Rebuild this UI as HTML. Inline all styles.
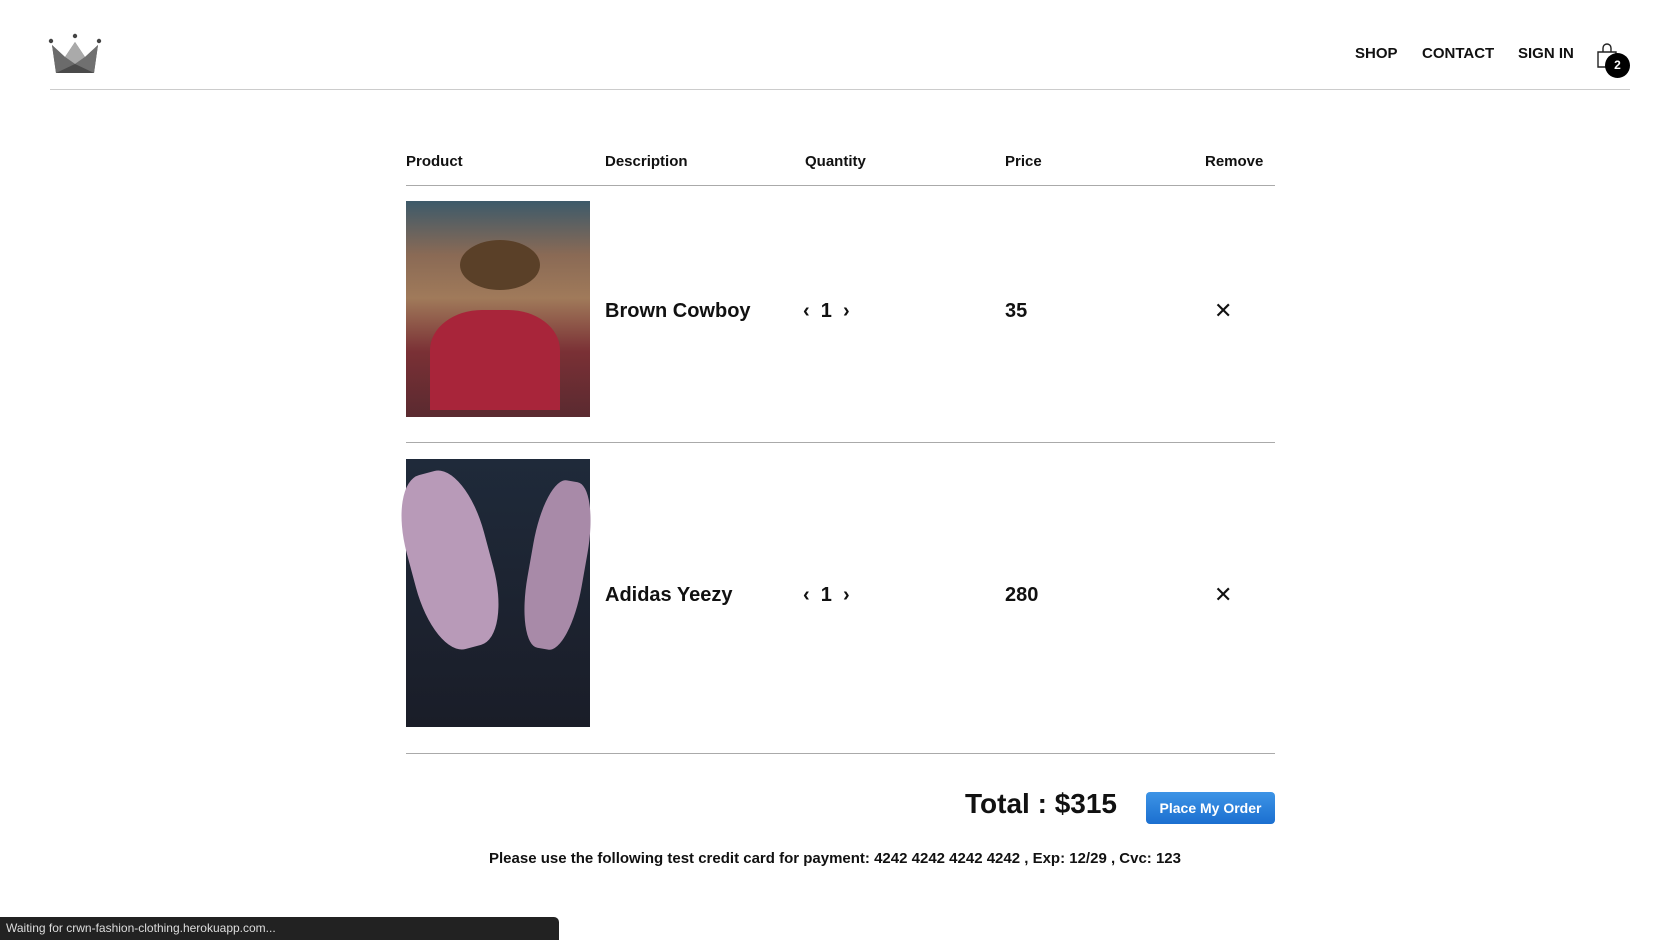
<!DOCTYPE html>
<html><head><style>
*{margin:0;padding:0;box-sizing:border-box}
body{width:1680px;height:940px;background:#fff;font-family:"Liberation Sans",sans-serif;color:#111;position:relative;overflow:hidden}
.a{position:absolute;white-space:nowrap}
.hl{position:absolute;height:1px;background:#ccc}
.nav{font-size:15px;font-weight:bold;top:45px}
.th{font-size:15px;font-weight:bold;top:153px}
.name{font-size:20px;font-weight:bold}
.q{font-size:20px;font-weight:bold}
</style></head><body>
<svg class="a" style="left:48px;top:33px" width="56" height="44" viewBox="0 0 56 44">
<circle cx="3" cy="8" r="2.2" fill="#444"/><circle cx="27" cy="3" r="2.2" fill="#444"/><circle cx="51" cy="8" r="2.2" fill="#444"/>
<polygon points="4,12 17,24 27,9 37,24 50,12 46,40 8,40" fill="#666"/>
<polygon points="17,24 27,9 37,24 27,31" fill="#aaa"/>
<polygon points="4,12 17,24 27,31 8,40" fill="#6b6b6b"/>
<polygon points="50,12 37,24 27,31 46,40" fill="#707070"/>
<polygon points="8,40 27,31 46,40" fill="#4a4a4a"/>
</svg>
<div class="hl" style="left:50px;width:1580px;top:89px"></div>
<div class="a nav" style="left:1355px">SHOP</div>
<div class="a nav" style="left:1422px">CONTACT</div>
<div class="a nav" style="left:1518px">SIGN IN</div>
<svg class="a" style="left:1596px;top:43px" width="24" height="26" viewBox="0 0 24 26"><path d="M2 9h18v15H2z" fill="none" stroke="#222" stroke-width="1.4"/><path d="M7 9V5a4 4 0 0 1 8 0v4" fill="none" stroke="#222" stroke-width="1.4"/></svg>
<div class="a" style="left:1605px;top:53px;width:25px;height:25px;border-radius:50%;background:#000;color:#fff;font-size:12px;font-weight:bold;text-align:center;line-height:25px">2</div>

<div class="a th" style="left:406px">Product</div>
<div class="a th" style="left:605px">Description</div>
<div class="a th" style="left:805px">Quantity</div>
<div class="a th" style="left:1005px">Price</div>
<div class="a th" style="left:1205px">Remove</div>
<div class="hl" style="left:406px;width:869px;top:185px;background:#aaa"></div>

<div class="a" style="left:406px;top:201px;width:184px;height:216px;background:linear-gradient(180deg,#3d5a6a 0%,#8a6a55 25%,#a07a5a 45%,#7a3035 70%,#5a2a30 100%)"></div>
<div class="a" style="left:460px;top:240px;width:80px;height:50px;border-radius:50%;background:#5a4028"></div>
<div class="a" style="left:430px;top:310px;width:130px;height:100px;border-radius:40% 40% 0 0;background:#a8253a"></div>
<div class="a name" style="left:605px;top:300px">Brown Cowboy</div>
<div class="a q" style="left:803px;top:300px">‹&nbsp;&nbsp;1&nbsp;&nbsp;›</div>
<div class="a q" style="left:1005px;top:300px">35</div>
<div class="a" style="left:1214px;top:298px;font-size:22px">✕</div>
<div class="hl" style="left:406px;width:869px;top:442px;background:#aaa"></div>

<div class="a" style="left:406px;top:459px;width:184px;height:268px;background:linear-gradient(180deg,#1f2a3a,#1a1d28)"></div>
<div class="a" style="left:410px;top:470px;width:80px;height:180px;border-radius:40%;background:#b89ab8;transform:rotate(-15deg)"></div>
<div class="a" style="left:530px;top:480px;width:55px;height:170px;border-radius:40%;background:#a88aa8;transform:rotate(10deg)"></div>
<div class="a name" style="left:605px;top:584px">Adidas Yeezy</div>
<div class="a q" style="left:803px;top:584px">‹&nbsp;&nbsp;1&nbsp;&nbsp;›</div>
<div class="a q" style="left:1005px;top:584px">280</div>
<div class="a" style="left:1214px;top:582px;font-size:22px">✕</div>
<div class="hl" style="left:406px;width:869px;top:753px;background:#aaa"></div>

<div class="a" style="left:965px;top:788px;font-size:28px;font-weight:bold">Total : $315</div>
<div class="a" style="left:1146px;top:792px;width:129px;height:32px;border-radius:4px;background:linear-gradient(#3d94e6,#1b6fd0);color:#fff;font-size:14px;font-weight:bold;text-align:center;line-height:32px">Place My Order</div>
<div class="a" style="left:489px;top:850px;font-size:15px;font-weight:bold">Please use the following test credit card for payment: 4242 4242 4242 4242 , Exp: 12/29 , Cvc: 123</div>

<div class="a" style="left:0;top:917px;width:559px;height:23px;background:#222;border-radius:0 5px 0 0;color:#ddd;font-size:12px;line-height:23px;padding-left:6px">Waiting for crwn-fashion-clothing.herokuapp.com...</div>
</body></html>
